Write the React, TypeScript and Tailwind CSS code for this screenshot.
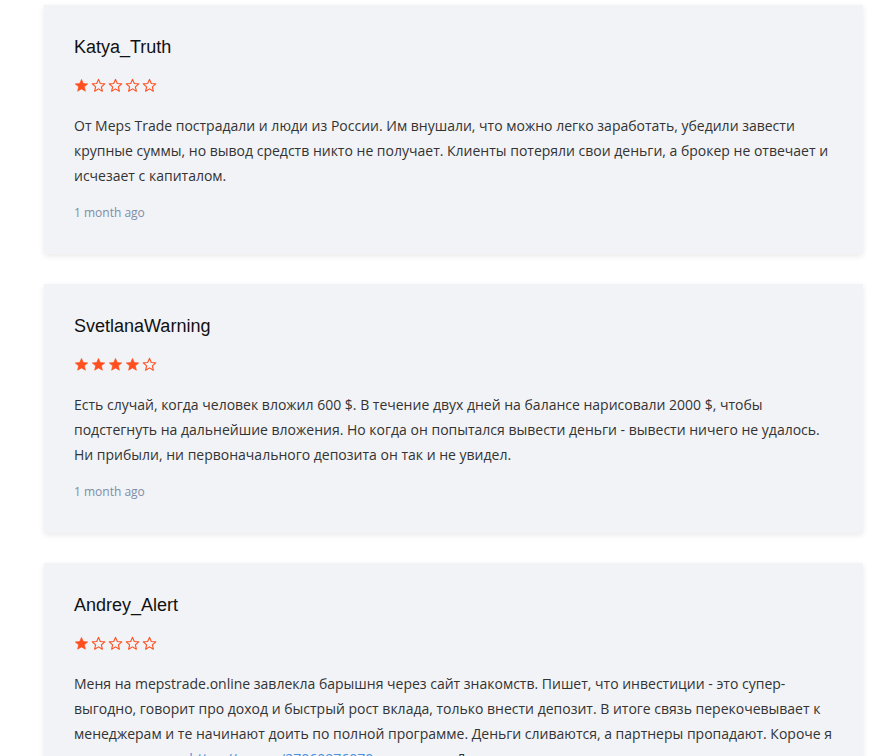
const reviews = [
  {
    name: 'Katya_Truth',
    rating: 1,
    text: 'От Meps Trade пострадали и люди из России. Им внушали, что можно легко заработать, убедили завести крупные суммы, но вывод средств никто не получает. Клиенты потеряли свои деньги, а брокер не отвечает и исчезает с капиталом.',
    date: '1 month ago',
  },
  {
    name: 'SvetlanaWarning',
    rating: 4,
    text: 'Есть случай, когда человек вложил 600 $. В течение двух дней на балансе нарисовали 2000 $, чтобы подстегнуть на дальнейшие вложения. Но когда он попытался вывести деньги - вывести ничего не удалось. Ни прибыли, ни первоначального депозита он так и не увидел.',
    date: '1 month ago',
  },
]

function Star({ filled }: { filled: boolean }) {
  return (
    <svg width="15" height="15" viewBox="0 0 24 24" className="shrink-0">
      <path
        d="M12 2.2l2.9 6.6 7.1.6-5.4 4.7 1.6 7-6.2-3.7-6.2 3.7 1.6-7L2 9.4l7.1-.6z"
        fill={filled ? '#ff4f1f' : 'none'}
        stroke="#ff4f1f"
        strokeWidth={filled ? 1 : 1.8}
        strokeLinejoin="round"
      />
    </svg>
  )
}

function Stars({ rating }: { rating: number }) {
  return (
    <div className="mt-[18px] flex h-4 items-center gap-[2px]">
      {[1, 2, 3, 4, 5].map((i) => (
        <Star key={i} filled={i <= rating} />
      ))}
    </div>
  )
}

function Card(props: { name: string, rating: number, date?: string, children: React.ReactNode }) {
  return (
    <div className="bg-[#f2f3f7] px-[30px] pt-[30px] pb-[32px] shadow-[0_2px_6px_rgba(0,0,0,0.09)]">
      <h3 className="font-['Liberation_Sans',Arial,sans-serif] text-[18px] leading-6 text-[#111]">{props.name}</h3>
      <Stars rating={props.rating} />
      <p className="mt-5 font-['Open_Sans',sans-serif] text-[14px] leading-[25px] text-[#333]">{props.children}</p>
      {props.date && (
        <p className="mt-4 font-['Open_Sans',sans-serif] text-[12px] leading-[18px] text-[#7d8ea6]">{props.date}</p>
      )}
    </div>
  )
}

export default function App() {
  return (
    <div className="h-[756px] overflow-hidden bg-white pt-[5px] pl-[44px] pr-[15px]">
      <div className="flex flex-col gap-[30px]">
        {reviews.map((r) => (
          <Card key={r.name} name={r.name} rating={r.rating} date={r.date}>{r.text}</Card>
        ))}
        <Card name="Andrey_Alert" rating={1}>
          Меня на mepstrade.online завлекла барышня через сайт знакомств. Пишет, что инвестиции - это супер-выгодно, говорит про доход и быстрый рост вклада, только внести депозит. В итоге связь перекочевывает к менеджерам и те начинают доить по полной программе. Деньги сливаются, а партнеры пропадают. Короче я узнал у юристов{' '}
          <a className="text-[#4a90e2]" href="#">https://wa.me/27060976070</a> что к чему. Доктрен, уже помогли с выводом, но зато реально вернули часть денег.
        </Card>
      </div>
    </div>
  )
}
